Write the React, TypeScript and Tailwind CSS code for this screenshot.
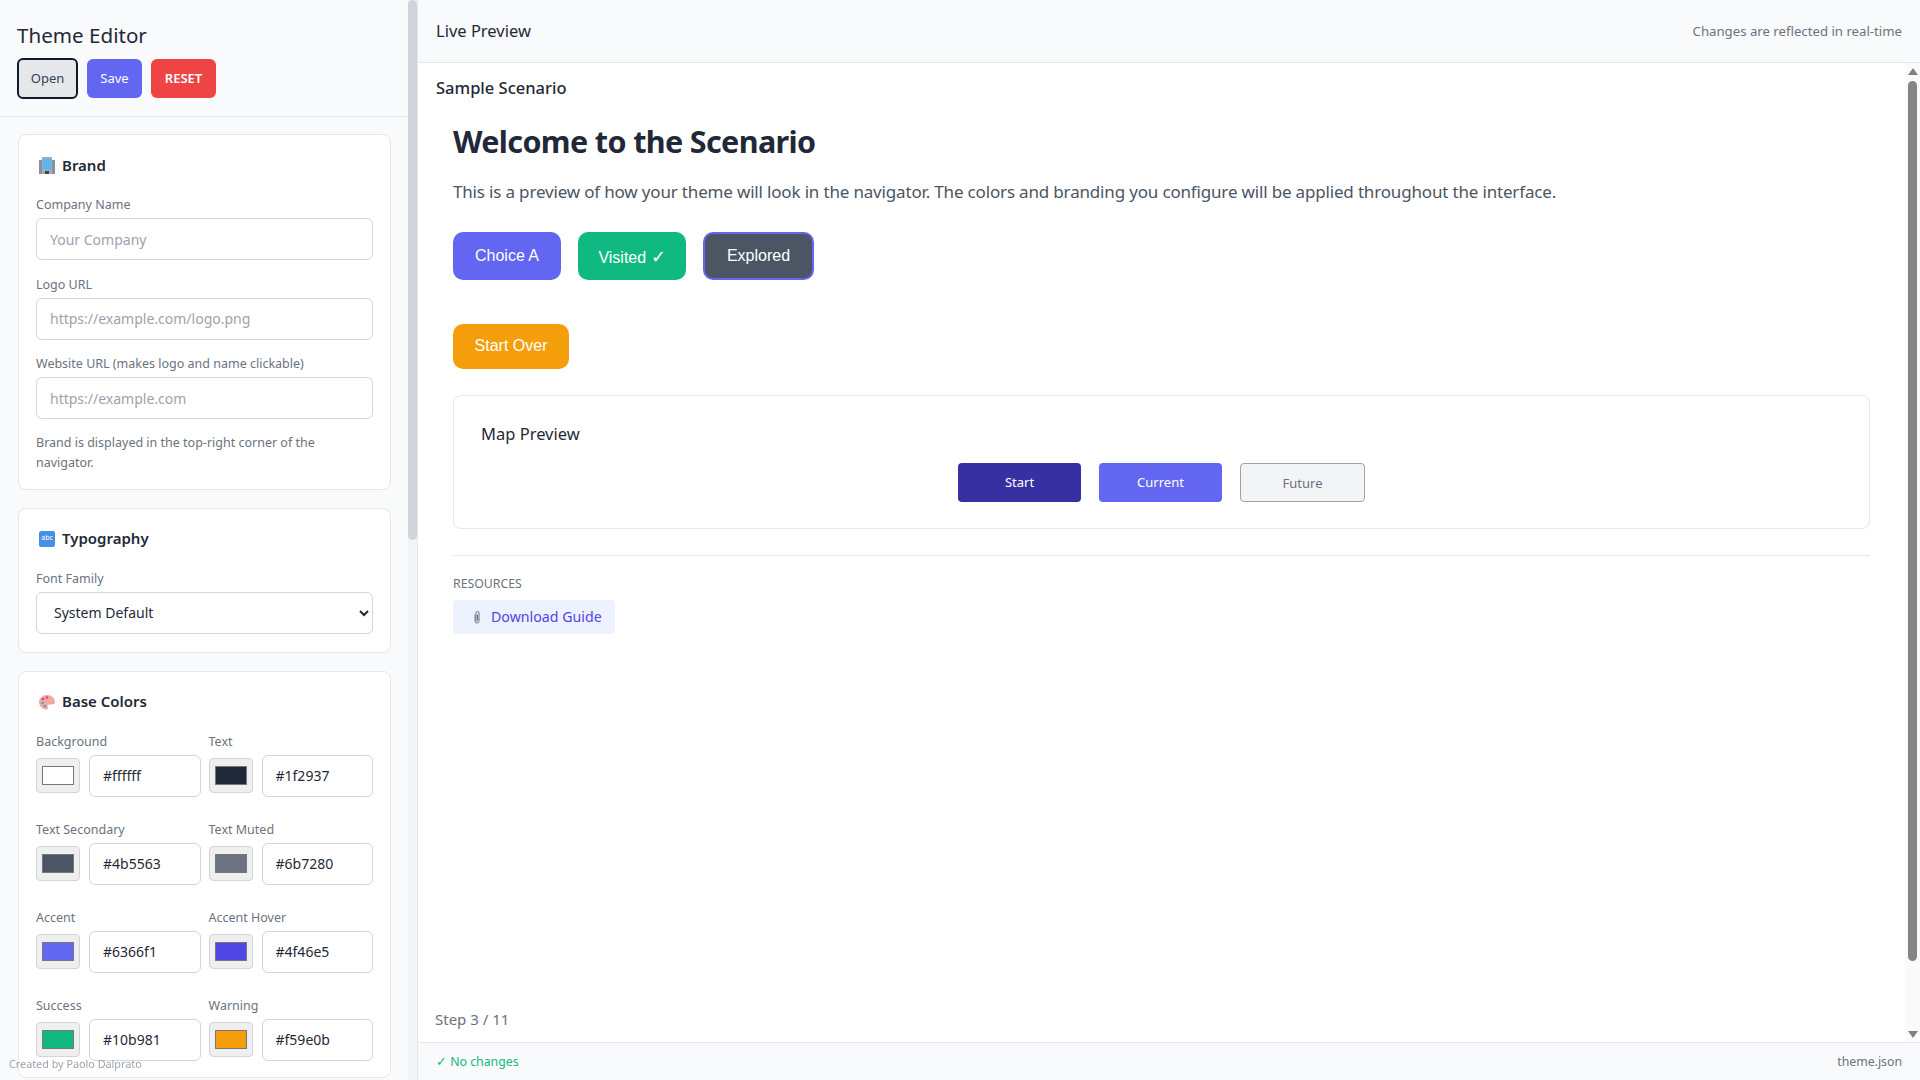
import React from 'react'

const ui = "font-['Noto_Sans','Open_Sans',sans-serif]"

function Field({ label, placeholder }: { label: string; placeholder: string }) {
  return (
    <div className="mb-[15.5px]">
      <label className="mb-[4px] block text-[12.5px] leading-[18px] text-[#6b7280]">{label}</label>
      <input
        placeholder={placeholder}
        className="h-[42px] w-full rounded-[6px] border border-[#d1d5db] bg-white px-[13px] text-[14px] text-[#1f2937] placeholder:text-[#9ca3af]"
      />
    </div>
  )
}

function ColorField({ label, value }: { label: string; value: string }) {
  return (
    <div>
      <label className="mb-[4px] block text-[12.5px] leading-[18px] text-[#6b7280]">{label}</label>
      <div className="flex items-center gap-[9px]">
        <input
          type="color"
          defaultValue={value}
          className="h-[35px] w-[44px] shrink-0 rounded-[4px] border border-[#d1d5db] bg-[#efefef] p-[3px]"
        />
        <input
          defaultValue={value}
          className="h-[42px] min-w-0 flex-1 rounded-[6px] border border-[#d1d5db] bg-white px-[13px] text-[14px] text-[#1f2937]"
        />
      </div>
    </div>
  )
}

function Card({ icon, title, children }: { icon: React.ReactNode; title: string; children: React.ReactNode }) {
  return (
    <section className="mb-[18px] rounded-[8px] border border-[#e5e7eb] bg-white px-[17px] pb-[16px] pt-[16px]">
      <h3 className="mb-[17px] flex h-[28px] items-center gap-[7px] pl-[3px] text-[15px] font-semibold text-[#1f2937]">
        {icon}
        {title}
      </h3>
      {children}
    </section>
  )
}

function BuildingIcon() {
  return (
    <svg width="16" height="17" viewBox="0 0 16 17" className="shrink-0">
      <rect x="0" y="3" width="3" height="14" fill="#8a8ea3" />
      <rect x="13" y="3" width="3" height="14" fill="#8a8ea3" />
      <rect x="3" y="0" width="10" height="17" fill="#a5a9bb" />
      <rect x="4" y="2" width="8" height="10" fill="#55b8ee" />
      <rect x="6" y="14" width="4" height="3" fill="#3f4352" />
    </svg>
  )
}

function PaletteIcon() {
  return (
    <svg width="16" height="16" viewBox="0 0 16 16" className="shrink-0">
      <path d="M8 1C3.600 1 0 4 0 8s3.500 7.500 7.500 7.500c2 0 1.500-2 1-3s.5-2 2-2h3c1.500 0 2.500-1 2.500-2.500C16 4 12.400 1 8 1z" fill="#f4a9a0" />
      <circle cx="4" cy="5" r="1.300" fill="#e0409a" />
      <circle cx="8" cy="3.500" r="1.300" fill="#e0409a" />
      <circle cx="3.500" cy="9" r="1.300" fill="#38a6e0" />
      <circle cx="6" cy="12" r="1.300" fill="#38a6e0" />
    </svg>
  )
}

function ClipIcon() {
  return (
    <svg width="16" height="16" viewBox="0 0 16 16" fill="none" stroke="#6b7280" strokeWidth="1" className="shrink-0">
      <path d="M6 5.500V12a2 2 0 0 0 4 0V4a1.500 1.500 0 0 0-3 0v7a.7.7 0 0 0 1.500 0V5.500" />
    </svg>
  )
}

export default function App() {
  return (
    <div className={`flex h-screen w-full overflow-hidden bg-white text-[#1f2937] ${ui}`}>
      <aside className="relative flex h-full w-[418px] shrink-0 flex-col overflow-hidden border-r border-[#e5e7eb] bg-[#f9fafb] pr-[9px]">
        <header className="h-[117px] shrink-0 border-b border-[#e5e7eb] px-[17px] pt-[20px]">
          <h2 className="text-[20.6px] leading-[31px] text-[#1f2937]">Theme Editor</h2>
          <div className="mt-[7px] flex items-center gap-[9px]">
            <button className="h-[41px] w-[61px] rounded-[6px] border-2 border-[#111827] bg-[#e5e7eb] text-[13px] text-[#374151]">Open</button>
            <button className="h-[39px] w-[55px] rounded-[6px] bg-[#6366f1] text-[13px] text-white">Save</button>
            <button className="h-[39px] w-[65px] rounded-[6px] bg-[#ef4444] text-[13px] font-semibold text-white">RESET</button>
          </div>
        </header>
        <div className="min-h-0 flex-1 overflow-hidden pl-[18px] pr-[17px] pt-[17px]">
          <Card icon={<BuildingIcon />} title="Brand">
            <Field label="Company Name" placeholder="Your Company" />
            <Field label="Logo URL" placeholder="https://example.com/logo.png" />
            <Field label="Website URL (makes logo and name clickable)" placeholder="https://example.com" />
            <p className="-mt-[2px] text-[12.5px] leading-[20px] text-[#6b7280]">
              Brand is displayed in the top-right corner of the navigator.
            </p>
          </Card>
          <Card icon={<span className="flex h-[16px] w-[16px] shrink-0 items-center justify-center rounded-[2px] bg-[#4a90e2] text-[7px] font-normal text-white">abc</span>} title="Typography">
            <label className="mb-[4px] block text-[12.5px] leading-[18px] text-[#6b7280]">Font Family</label>
            <select className="mb-[2px] block h-[42px] w-full rounded-[6px] border border-[#d1d5db] bg-white px-[13px] text-[14px] text-[#1f2937]">
              <option>System Default</option>
            </select>
          </Card>
          <Card icon={<PaletteIcon />} title="Base Colors">
            <div className="grid grid-cols-2 gap-x-[8px] gap-y-[24px]">
              <ColorField label="Background" value="#ffffff" />
              <ColorField label="Text" value="#1f2937" />
              <ColorField label="Text Secondary" value="#4b5563" />
              <ColorField label="Text Muted" value="#6b7280" />
              <ColorField label="Accent" value="#6366f1" />
              <ColorField label="Accent Hover" value="#4f46e5" />
              <ColorField label="Success" value="#10b981" />
              <ColorField label="Warning" value="#f59e0b" />
            </div>
          </Card>
        </div>
        {/* scrollbar */}
        <div className="absolute bottom-0 right-0 top-0 w-[9px] bg-[#f3f4f6]">
          <div className="h-[540px] w-full rounded-[5px] bg-[#d1d5db]" />
        </div>
      </aside>

      <main className="flex h-full min-w-0 flex-1 flex-col">
        <header className="flex h-[63px] shrink-0 items-center justify-between border-b border-[#e5e7eb] bg-[#f9fafb] pl-[18px] pr-[18px] pt-[1px]">
          <span className="text-[16.5px] text-[#1f2937]">Live Preview</span>
          <span className="text-[13.2px] text-[#6b7280]">Changes are reflected in real-time</span>
        </header>

        <div className="relative flex min-h-0 flex-1 flex-col pr-[15px]">
          <div className="flex-1 pl-[18px] pr-[6px]">
            <div className="pt-[13px] text-[16.5px] font-medium leading-[24px] text-[#1f2937]">Sample Scenario</div>
            <div className="pl-[17px] pr-[29px]">
              <h1 className="mt-[17px] text-[30.5px] font-bold leading-[48px] tracking-[-0.63px] text-[#1f2937]">Welcome to the Scenario</h1>
              <p className="mt-[13px] text-[17px] leading-[28px] tracking-[-0.17px] text-[#4b5563]">
                This is a preview of how your theme will look in the navigator. The colors and branding you configure will be applied throughout the interface.
              </p>
              <div className="mt-[26px] flex gap-[17px] font-['Liberation_Sans',sans-serif] text-[16px] text-white">
                <button className="h-[48px] w-[108px] rounded-[10px] bg-[#6366f1]">Choice A</button>
                <button className="h-[48px] w-[108px] rounded-[10px] bg-[#10b981] pt-[3px]">Visited <span className="text-[18px]">✓</span></button>
                <button className="h-[48px] w-[111px] rounded-[10px] border-2 border-[#6366f1] bg-[#4b5563]">Explored</button>
              </div>
              <button className="mt-[44px] block h-[45px] w-[116px] rounded-[10px] bg-[#f59e0b] pb-[2px] font-['Liberation_Sans',sans-serif] text-[16px] text-white">Start Over</button>

              <div className="mt-[26px] h-[134px] rounded-[8px] border border-[#e5e7eb] px-[27px] pt-[26px]">
                <div className="text-[16.5px] leading-[24px] text-[#1f2937]">Map Preview</div>
                <div className="mt-[17px] flex justify-center gap-[18px] text-[13px]">
                  <div className="flex h-[39px] w-[123px] items-center justify-center rounded-[4px] bg-[#3730a3] text-white">Start</div>
                  <div className="flex h-[39px] w-[123px] items-center justify-center rounded-[4px] bg-[#6366f1] text-white">Current</div>
                  <div className="flex h-[39px] w-[125px] items-center justify-center rounded-[4px] border border-[#9ca3af] bg-[#f3f4f6] pt-[2px] text-[#6b7280]">Future</div>
                </div>
              </div>

              <div className="mt-[26px] border-t border-[#e5e7eb] pt-[19px]">
                <div className="text-[12.3px] leading-[18px] text-[#6b7280]">RESOURCES</div>
                <a className="mt-[7px] inline-flex h-[34px] items-center gap-[6px] rounded-[4px] bg-[#eef2ff] pl-[16px] pr-[13px] text-[14.2px] text-[#4f46e5]">
                  <ClipIcon />
                  Download Guide
                </a>
              </div>
            </div>
          </div>
          <div className="h-[35px] pl-[17px] text-[15px] leading-[24px] text-[#6b7280]">Step 3 / 11</div>

          {/* scrollbar */}
          <div className="absolute bottom-0 right-0 top-0 flex w-[15px] flex-col items-center bg-[#fafafa]">
            <div className="mt-[5px] h-0 w-0 border-x-[5px] border-b-[7px] border-x-transparent border-b-[#808080]" />
            <div className="mt-[6px] h-[880px] w-[9px] rounded-[5px] bg-[#858585]" />
            <div className="mb-[4px] mt-auto h-0 w-0 border-x-[5px] border-t-[7px] border-x-transparent border-t-[#808080]" />
          </div>
        </div>

        <footer className="flex h-[38px] shrink-0 items-center justify-between border-t border-[#e5e7eb] bg-[#f9fafb] px-[18px] pt-[1px] text-[12.3px]">
          <span className="text-[#10b981]"><span className="text-[13px] leading-none">✓</span> No changes</span>
          <span className="text-[#6b7280]">theme.json</span>
        </footer>
      </main>

      <div className="fixed bottom-[9px] left-[9px] text-[10.8px] leading-[14px] text-[#9ca3af]">Created by Paolo Dalprato</div>
    </div>
  )
}
